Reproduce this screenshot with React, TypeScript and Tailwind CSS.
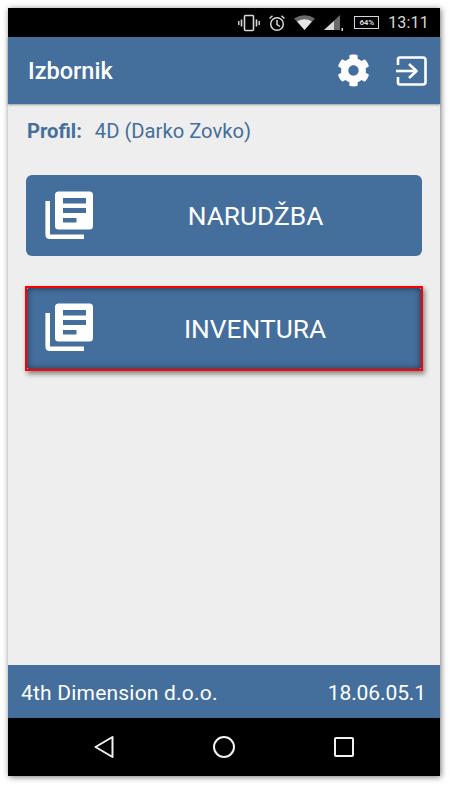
import React from "react";
import { FaCog } from "react-icons/fa";

function DocIcon({ selected }: { selected?: boolean }) {
  return (
    <svg width="50" height="50" viewBox="0 0 50 50" className={selected ? "shrink-0 -mt-[1px]" : "shrink-0 mt-[1px]"}>
      <path d="M2.7 10 V43.5 Q2.7 45.7 5 45.7 H39" fill="none" stroke="#fff" strokeWidth="4.6" />
      <path fillRule="evenodd" fill="#fff" d="M13.5 0.5 H44.5 Q48 0.5 48 4 V35 Q48 38.5 44.5 38.5 H13.5 Q10 38.5 10 35 V4 Q10 0.5 13.5 0.5 Z M18 7 V12.5 H41 V7 Z M18 17 V22 H41 V17 Z M18 27 V31.5 H31.5 V27 Z" />
    </svg>
  );
}

function MenuButton({ label, selected }: { label: string; selected?: boolean }) {
  const body = (
    <>
      <DocIcon selected={selected} />
      <span className="flex-1 pt-[2px] pr-[6px] text-center text-[26.3px] leading-none text-white">{label}</span>
    </>
  );
  if (selected) {
    return (
      <div className="-ml-px h-[85px] w-[398px] border-2 border-[#ff0000] bg-[#e4e4e4] shadow-[2px_3px_5px_rgba(0,0,0,0.45)]">
        <div className="flex h-full w-full items-center rounded-[2px] bg-[#446e9b] pl-[18px] shadow-[inset_0_0_6px_rgba(0,0,0,0.55)]">
          {body}
        </div>
      </div>
    );
  }
  return <div className="flex h-[81px] w-[396px] items-center rounded-[6px] bg-[#446e9b] pl-[19px]">{body}</div>;
}

export default function App() {
  return (
    <div className="h-[785px] w-[449px] bg-white p-2 font-['Roboto',sans-serif]">
      <div className="flex h-[768px] w-[432px] flex-col bg-[#eeeeee] shadow-[1px_1px_6px_rgba(0,0,0,0.55)]">
        {/* status bar */}
        <div className="flex h-[29px] items-center justify-end bg-black pr-[11px] text-[#d6d6d6]">
          <svg width="22" height="18" viewBox="0 0 22 18" className="mr-[8px]" fill="none" stroke="#d6d6d6">
            <rect x="6.5" y="1.5" width="9" height="15" rx="1" strokeWidth="1.6" />
            <path d="M3.5 5.5v7M18.5 5.5v7" strokeWidth="1.6" />
            <path d="M0.8 7v4M21.2 7v4" strokeWidth="1.4" />
          </svg>
          <svg width="18" height="18" viewBox="0 0 18 18" className="mr-[8px]" fill="none" stroke="#d6d6d6" strokeWidth="1.5">
            <circle cx="9" cy="10" r="6.3" />
            <path d="M9 6v4.5l3 2M1.5 4.5 4.5 1.8M16.5 4.5 13.5 1.8" />
          </svg>
          <svg width="21" height="15" viewBox="0 0 21 15" className="mr-[8px]">
            <path d="M0 3.5 Q10.5 -3 21 3.5 L10.5 15 Z" fill="#6a6a6a" />
            <path d="M3.2 6.5 Q10.5 2 17.8 6.5 L10.5 15 Z" fill="#e6e6e6" />
          </svg>
          <svg width="20" height="17" viewBox="0 0 20 17" className="mr-[11px]">
            <path d="M17 1 V16 H1 Z" fill="#6a6a6a" />
            <path d="M11 7 V16 H1 Z" fill="#d8d8d8" />
            <rect x="18.5" y="14" width="1.5" height="3" fill="#d6d6d6" />
          </svg>
          <div className="mr-[9px] flex h-[13px] w-[25px] items-center justify-center border border-[#d6d6d6] text-[8px] font-bold leading-none tracking-[-0.2px]">
            64%
          </div>
          <span className="text-[16px] leading-none tracking-[0.2px]">13:11</span>
        </div>

        {/* header */}
        <div className="flex h-[67px] items-center justify-between bg-[#446e9b] pl-[20px] pr-[13px] shadow-[0_1px_2px_rgba(0,0,0,0.35)]">
          <span className="pt-[2px] text-[23.5px] font-medium leading-none text-white">Izbornik</span>
          <div className="flex items-center gap-[26px]">
            <FaCog className="h-[33px] w-[33px] text-white" />
            <svg width="31" height="30" viewBox="0 0 31 30" fill="none" stroke="#fff" strokeWidth="2.6" strokeLinejoin="round">
              <path d="M2 9 V3.5 Q2 1.5 4 1.5 H27 Q29.5 1.5 29.5 4 V26 Q29.5 28.5 27 28.5 H4 Q2 28.5 2 26.5 V21" />
              <path d="M0 15 H19" />
              <path d="M13 8 L20.5 15 L13 22" />
            </svg>
          </div>
        </div>

        {/* profile */}
        <div className="flex h-[53px] items-center pl-[19px] pt-[2px] text-[20.2px] leading-none text-[#446e9b]">
          <span className="font-bold">Profil:</span>
          <span className="ml-[13px]">4D (Darko Zovko)</span>
        </div>

        {/* buttons */}
        <div className="flex flex-1 flex-col gap-[30px] pl-[18px] pt-[18px]">
          <MenuButton label="NARUDŽBA" />
          <MenuButton label="INVENTURA" selected />
        </div>

        {/* footer */}
        <div className="flex h-[53px] items-center justify-between bg-[#446e9b] pl-[13px] pr-[14px] pt-[3px] text-[21px] leading-none text-white">
          <span className="tracking-[0.2px]">4th Dimension d.o.o.</span>
          <span className="tracking-[-0.1px]">18.06.05.1</span>
        </div>

        {/* nav bar */}
        <div className="flex h-[58px] items-center bg-black pl-[86px]">
          <svg width="20" height="24" viewBox="0 0 20 24" fill="none" stroke="#f2f2f2" strokeWidth="2" strokeLinejoin="round">
            <path d="M18.5 2 V22 L1.5 12 Z" />
          </svg>
          <svg width="24" height="24" viewBox="0 0 24 24" fill="none" stroke="#f2f2f2" strokeWidth="2" className="ml-[98px]">
            <circle cx="12" cy="12" r="10" />
          </svg>
          <svg width="20" height="20" viewBox="0 0 20 20" fill="none" stroke="#f2f2f2" strokeWidth="2" className="ml-[98px]">
            <rect x="1" y="1" width="18" height="18" rx="1" />
          </svg>
        </div>
      </div>
    </div>
  );
}
